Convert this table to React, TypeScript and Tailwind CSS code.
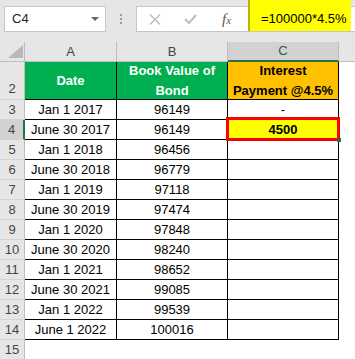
const rows = [
  { n: 3, date: "Jan 1 2017", value: "96149", c: "-" },
  { n: 4, date: "June 30 2017", value: "96149", c: "4500" },
  { n: 5, date: "Jan 1 2018", value: "96456", c: "" },
  { n: 6, date: "June 30 2018", value: "96779", c: "" },
  { n: 7, date: "Jan 1 2019", value: "97118", c: "" },
  { n: 8, date: "June 30 2019", value: "97474", c: "" },
  { n: 9, date: "Jan 1 2020", value: "97848", c: "" },
  { n: 10, date: "June 30 2020", value: "98240", c: "" },
  { n: 11, date: "Jan 1 2021", value: "98652", c: "" },
  { n: 12, date: "June 30 2021", value: "99085", c: "" },
  { n: 13, date: "Jan 1 2022", value: "99539", c: "" },
  { n: 14, date: "June 1 2022", value: "100016", c: "" },
];

function RowHead({ n, selected = false, tall = false }: { n: number; selected?: boolean; tall?: boolean }) {
  return (
    <div
      className={
        "w-[25px] shrink-0 flex justify-center border-b border-[#d4d4d4] text-[#444] " +
        (tall ? "items-end pb-[1px] " : "items-center ") +
        (selected ? "bg-[#d2d2d2] border-r-2 border-r-[#217346]" : "bg-[#e6e6e6] border-r border-r-[#bdbdbd]")
      }
    >
      {n}
    </div>
  );
}

export default function App() {
  return (
    <div className="w-[355px] h-[359px] overflow-hidden bg-white font-['Liberation_Sans',Arial,sans-serif] text-[13px] text-black">
      {/* Formula bar */}
      <div className="h-[42px] bg-[#e6e6e6] flex items-start pt-[6px] pl-[4px] overflow-hidden">
        <div className="w-[102px] h-[26px] shrink-0 bg-white border border-[#c6c6c6] flex items-center justify-between pl-[7px] pr-[6px] text-[#222]">
          <span>C4</span>
          <span className="w-0 h-0 border-l-[4px] border-r-[4px] border-t-[4px] border-l-transparent border-r-transparent border-t-[#666]" />
        </div>
        <div className="ml-[14px] mt-[8px] flex flex-col gap-[2px]">
          <span className="w-[2px] h-[2px] bg-[#9a9a9a]" />
          <span className="w-[2px] h-[2px] bg-[#9a9a9a]" />
          <span className="w-[2px] h-[2px] bg-[#9a9a9a]" />
        </div>
        <div className="relative ml-[14px] w-[230px] h-[26px] shrink-0 bg-white border border-[#c6c6c6] flex items-center">
          <svg className="ml-[12px]" width="12" height="11" viewBox="0 0 12 11">
            <path d="M1 0.5 L11 10.5 M11 0.5 L1 10.5" stroke="#bdbdbd" strokeWidth="1.4" fill="none" />
          </svg>
          <svg className="ml-[23px]" width="13" height="10" viewBox="0 0 13 10">
            <path d="M1 5 L5 9 L12 1" stroke="#bdbdbd" strokeWidth="2" fill="none" />
          </svg>
          <span className="ml-[25px] italic font-['Liberation_Serif',serif] text-[15px] text-[#555] leading-none">
            f<span className="text-[11px]">x</span>
          </span>
          <div className="absolute left-[111px] top-[-7px] w-[103px] h-[31px] bg-[#ffff00] border-l-2 border-[#b8b800] flex items-center pt-[7px] pl-[11px]">
            =100000*4.5%
          </div>
        </div>
      </div>

      {/* Column headings */}
      <div className="flex h-[20px] bg-[#e6e6e6] text-[#444]">
        <div className="w-[25px] shrink-0 border-r border-b border-[#bdbdbd] flex items-end justify-end pr-[1px] pb-[3px]">
          <svg width="15" height="13" viewBox="0 0 15 13">
            <path d="M15 0 L15 13 L0 13 Z" fill="#b9b9b9" />
          </svg>
        </div>
        <div className="w-[92px] shrink-0 border-r border-b border-[#bdbdbd] flex items-center justify-center">A</div>
        <div className="w-[111px] shrink-0 border-r border-b border-[#bdbdbd] flex items-center justify-center">B</div>
        <div className="w-[111px] shrink-0 bg-[#d2d2d2] border-r border-r-[#bdbdbd] border-b-2 border-b-[#217346] flex items-center justify-center text-[#2d5c46]">
          C
        </div>
        <div className="flex-1 border-b border-[#bdbdbd]" />
      </div>

      {/* Row 2: table header */}
      <div className="flex h-[38px]">
        <RowHead n={2} tall />
        <div className="w-[92px] shrink-0 bg-[#00b050] border-r border-b border-black flex items-center justify-center font-bold text-white">
          Date
        </div>
        <div className="w-[111px] shrink-0 bg-[#00b050] border-r border-b border-black flex flex-col items-center justify-center font-bold text-white leading-[20px]">
          <span>Book Value of</span>
          <span>Bond</span>
        </div>
        <div className="w-[111px] shrink-0 bg-[#ffc000] border-r border-b border-black flex flex-col items-center justify-center font-bold leading-[20px]">
          <span>Interest</span>
          <span>Payment @4.5%</span>
        </div>
        <div className="flex-1" />
      </div>

      {/* Data rows */}
      {rows.map((r) => (
        <div key={r.n} className="flex h-[20px]">
          <RowHead n={r.n} selected={r.n === 4} />
          <div className="w-[92px] shrink-0 border-r border-b border-black flex items-center justify-center pt-[1px]">
            {r.date}
          </div>
          <div className="w-[111px] shrink-0 border-r border-b border-black flex items-center justify-center pt-[1px]">
            {r.value}
          </div>
          {r.n === 4 ? (
            <div className="relative w-[111px] shrink-0 bg-[#ffff00] border-r border-b border-black flex items-center justify-center pt-[1px] font-bold">
              {r.c}
              <span className="absolute -left-[2px] -right-[2px] -top-[3px] -bottom-[2px] border-[3px] border-[#ff0000] z-10" />
              <span className="absolute -right-[3px] -bottom-[3px] w-[4px] h-[4px] bg-[#217346] z-20" />
            </div>
          ) : (
            <div className="w-[111px] shrink-0 border-r border-b border-black flex items-center justify-center pt-[1px]">
              {r.c}
            </div>
          )}
          <div className="flex-1" />
        </div>
      ))}

      {/* Row 15 */}
      <div className="flex h-[20px]">
        <RowHead n={15} />
        <div className="flex-1" />
      </div>
    </div>
  );
}
